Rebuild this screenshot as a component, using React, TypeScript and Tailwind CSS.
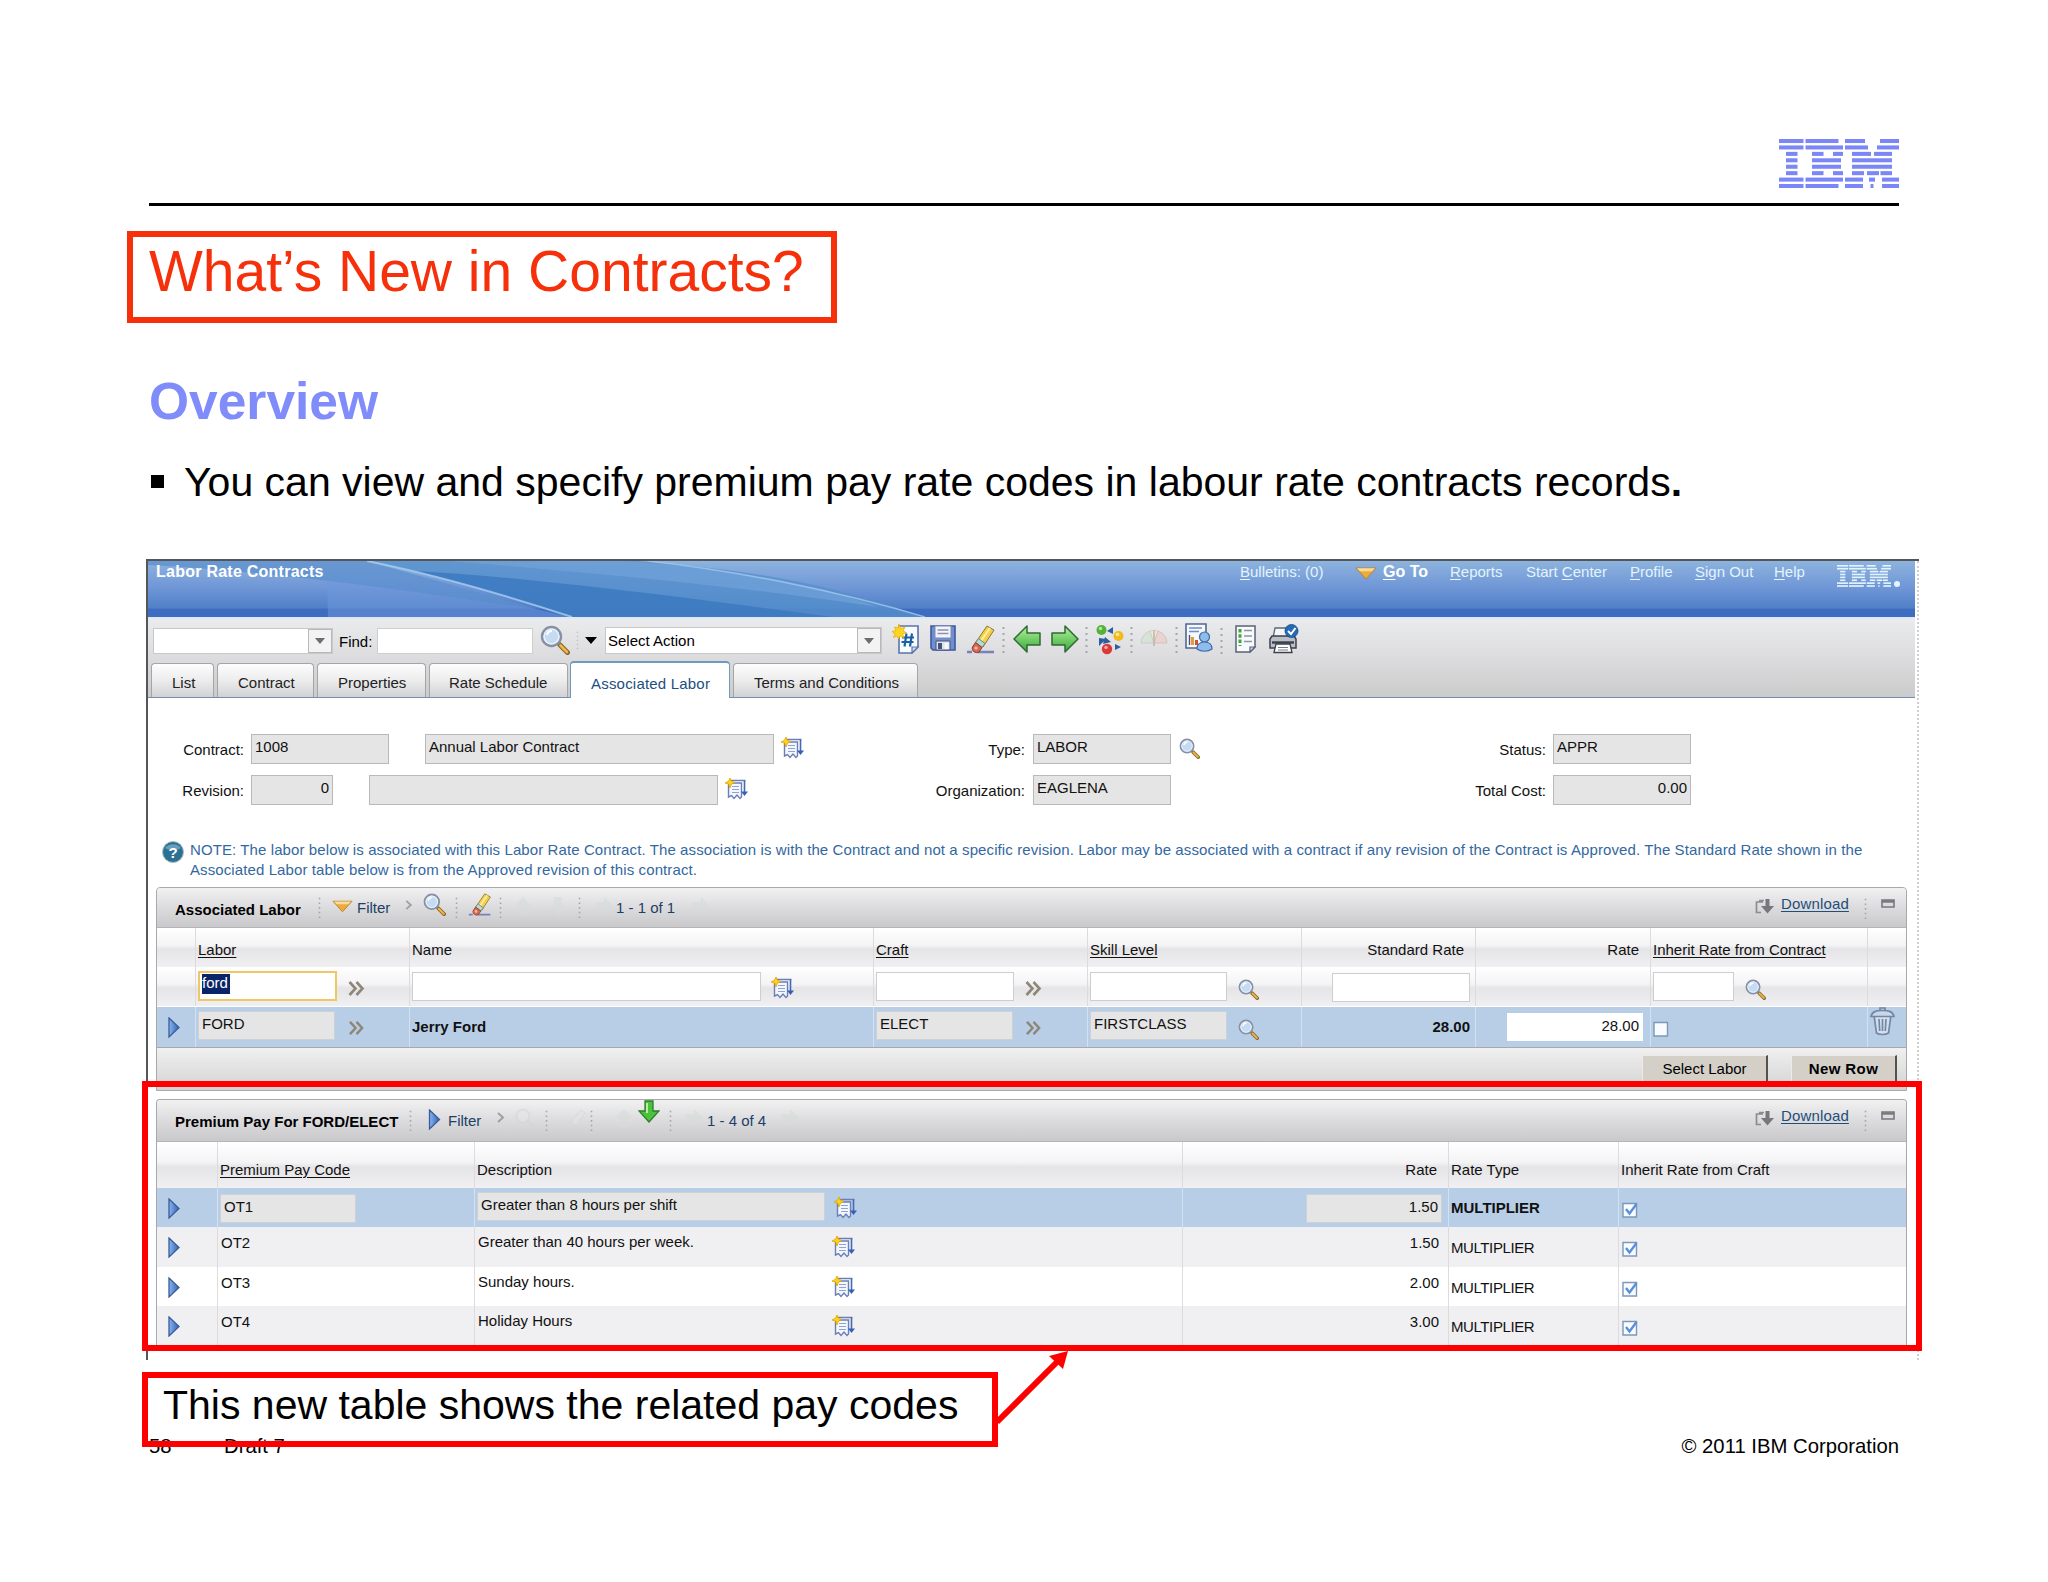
import type { ReactNode } from "react";

const stripeRows = [0, 1, 2, 3, 4, 5, 6, 7];

// Eight-bar logo, each row is a list of [x, width] segments on a 120 wide grid
const logoRows: [number, number][][] = [
    [[0, 24.5], [26.5, 33], [66, 20], [101, 19]],
    [[0, 24.5], [26.5, 37.5], [66, 23], [98, 22]],
    [[7, 11.5], [33, 11.5], [54, 10], [73, 19], [95, 18]],
    [[7, 11.5], [33, 29], [73, 40]],
    [[7, 11.5], [33, 29], [73, 40]],
    [[7, 11.5], [33, 11.5], [54, 10], [73, 12], [88, 12], [101.5, 11.5]],
    [[0, 24.5], [26.5, 37.5], [66, 18], [90, 6], [103, 17]],
    [[0, 24.5], [26.5, 33], [66, 18], [91.5, 3], [103, 17]],
];

function StripedLogo({ className, gap = 2.4 }: { className: string; gap?: number }) {
    return (
        <svg viewBox="0 0 120 49" preserveAspectRatio="none" className={className} fill="currentColor">
            {stripeRows.map((row) =>
                logoRows[row].map(([x, w]) => (
                    <rect key={`${row}-${x}`} x={x} y={row * 6.43} width={w} height={6.43 - gap} />
                ))
            )}
        </svg>
    );
}

function Lens({ className }: { className: string }) {
    return (
        <svg viewBox="0 0 30 30" className={className}>
            <path d="M18 18l3 3" stroke="#8a8f9a" strokeWidth="3" />
            <path d="M20 20l7.500 7.500" stroke="#8a6a2c" strokeWidth="5" strokeLinecap="round" />
            <path d="M20.500 20.500l6.500 6.500" stroke="#f0b64a" strokeWidth="2.600" strokeLinecap="round" />
            <circle cx="11.500" cy="11.500" r="9.500" fill="#c5dbf3" stroke="#8890a5" strokeWidth="2.400" />
            <circle cx="11.500" cy="11.500" r="7.400" fill="none" stroke="#e9f2fb" strokeWidth="1.400" />
            <path d="M7 10a5 5 0 0 1 5-4" stroke="#fff" strokeWidth="2" fill="none" />
        </svg>
    );
}

function Eraser({ className }: { className: string }) {
    return (
        <svg viewBox="0 0 28 30" className={className}>
            <path d="M0 27h5M11 27h16" stroke="#7a80b8" strokeWidth="2.400" />
            <path d="M20 1l7 4-11 17-7-5z" fill="#f3cf4c" stroke="#8a7430" strokeWidth="1" />
            <path d="M23 3l-11 16" stroke="#fff0a0" strokeWidth="2" />
            <path d="M11.500 13.500l6.500 5-3 4-6.500-5z" fill="#b9d9d3" stroke="#5f8984" strokeWidth="1" />
            <path d="M8.500 17.500l6.500 5-3 4.500c-3 2-8-1-6.500-5z" fill="#d9694f" stroke="#84382c" strokeWidth="1" />
            <circle cx="9" cy="23" r="1.600" fill="#f6b9a5" />
        </svg>
    );
}

function LongText({ className }: { className: string }) {
    return (
        <svg viewBox="0 0 23 22" className={className}>
            <path d="M5.500 2.500h15M3.500 4v15l3-1.500 2.500 3 3-3.500 3 3.500 1.500-1.500V5H5" fill="#f4f7fd" stroke="#6b7fb5" strokeWidth="1.400" />
            <path d="M7 8.500h7M7 11.500h7M7 14.500h7" stroke="#8ea2d3" strokeWidth="1.200" />
            <path d="M19.500 2.500v13" stroke="#4468b4" strokeWidth="1.600" />
            <path d="M16 13.500h7l-3.500 4.500z" fill="#3260b8" />
            <path d="M5 0l1.300 3.200L10 4.500 6.500 6 5 10 3.700 6 0 5l3.500-1.800z" fill="#ffd21c" stroke="#e0a400" strokeWidth=".8" />
        </svg>
    );
}

function NewRecord() {
    return (
        <svg viewBox="0 0 28 30" className="h-[30px] w-7">
            <path d="M7 2h19v21l-6 6H7z" fill="#f7fafe" stroke="#5b74ad" strokeWidth="1.600" />
            <path d="M20 29v-6h6z" fill="#cfdcf0" stroke="#5b74ad" strokeWidth="1.200" />
            <path d="M14.500 9.500l-2 13M20 9.500l-2 13M10 13.500h12M9.500 18h12" stroke="#1c5fa5" strokeWidth="2.200" />
            <path d="M7 0l1.500 4.500L13 3l-2 4 3.500 1.500-4 1.500 1.500 4-4-2-1.500 3-1.500-3-3.500 1.500 1.500-4L0 7.500l4-1L2.500 3l3.500 1z" fill="#ffd51e" stroke="#e6aa00" strokeWidth=".7" />
        </svg>
    );
}

function Floppy() {
    return (
        <svg viewBox="0 0 26 26" className="h-[26px] w-[26px]">
            <path d="M1 1h24v24H3l-2-2z" fill="#6f8fd0" stroke="#3f5a9b" strokeWidth="1.600" />
            <path d="M5 1h16v12H5z" fill="#f3f5fb" stroke="#7d8bb5" strokeWidth="1" />
            <path d="M7.500 5h11M7.500 8.500h11" stroke="#8b93ad" strokeWidth="1.400" />
            <path d="M6 16h14v9H6z" fill="#dfe3ec" stroke="#42527f" strokeWidth="1" />
            <path d="M8 18h4v6H8z" fill="#44527a" />
            <path d="M14.500 18h4v6h-4z" fill="#f6f7fa" />
        </svg>
    );
}

function BigArrow({ className }: { className: string }) {
    return (
        <svg viewBox="0 0 28 30" className={className}>
            <defs>
                <linearGradient id="arrowGreen" x1="0" y1="0" x2="0" y2="1">
                    <stop offset="0" stopColor="#b4f29c" />
                    <stop offset="1" stopColor="#38a838" />
                </linearGradient>
            </defs>
            <path d="M1 15L14 2v7h13v12H14v7z" fill="url(#arrowGreen)" stroke="#2f6a35" strokeWidth="1.500" strokeLinejoin="round" />
        </svg>
    );
}

function Workflow() {
    return (
        <svg viewBox="0 0 28 32" className="h-8 w-7">
            <path d="M11 7l6-4v7zM3 14l7 1-7 7zM19 20l6 3-6 3zM9 13l6 5-8 2z" fill="#2e5e9e" />
            <circle cx="5.500" cy="6" r="5" fill="#53b338" />
            <circle cx="4.500" cy="4.500" r="1.800" fill="#b0e59a" />
            <circle cx="22.500" cy="12" r="5" fill="#f3bb1a" />
            <circle cx="21.500" cy="10.500" r="1.800" fill="#fdeaa0" />
            <circle cx="11" cy="25" r="5.200" fill="#dc3838" />
            <circle cx="10" cy="23.500" r="1.800" fill="#f7a6a0" />
        </svg>
    );
}

function Gauge() {
    return (
        <svg viewBox="0 0 28 20" className="h-5 w-7 opacity-60">
            <path d="M1 15A13 13 0 0 1 10 3l4 12z" fill="#cfe3cf" stroke="#b8c4b8" />
            <path d="M10 3a13 13 0 0 1 8 0l-4 12z" fill="#f4eccb" stroke="#ccc4a8" />
            <path d="M18 3a13 13 0 0 1 9 12H14z" fill="#f0c9c0" stroke="#ccaaa4" />
            <path d="M14 2v16" stroke="#a89c8c" strokeWidth="1.600" />
        </svg>
    );
}

function Report() {
    return (
        <svg viewBox="0 0 28 30" className="h-[30px] w-7">
            <path d="M1 1h20v24H1z" fill="#f5f8fd" stroke="#55668f" strokeWidth="1.600" />
            <path d="M4 5h13M4 8.500h10" stroke="#6d8fc5" strokeWidth="1.600" />
            <path d="M4.500 12v10" stroke="#44547c" strokeWidth="1.400" />
            <path d="M6 14h3v8H6z" fill="#e89a35" />
            <path d="M10 17h3v5h-3z" fill="#d4512e" />
            <circle cx="19.500" cy="14" r="5" fill="#8fbdea" stroke="#3f6cab" strokeWidth="1.200" />
            <path d="M12 26c0-5 3-7 7.500-7s7.500 2 7.500 7c-4 3-11 3-15 0z" fill="#8fbdea" stroke="#3f6cab" strokeWidth="1.200" />
        </svg>
    );
}

function CheckList() {
    return (
        <svg viewBox="0 0 22 28" className="h-7 w-[22px]">
            <path d="M1 1h19v21l-5 5H1z" fill="#f8fafb" stroke="#5a6278" strokeWidth="1.500" />
            <path d="M15 27v-5h5z" fill="#d5dbe4" stroke="#5a6278" strokeWidth="1.200" />
            <path d="M5 4v17" stroke="#3fa540" strokeWidth="3" strokeDasharray="3.500 1.800" />
            <path d="M9 5.500h8M9 11h8M9 16.500h8" stroke="#8d93a3" strokeWidth="1.500" />
        </svg>
    );
}

function Printer() {
    return (
        <svg viewBox="0 0 30 30" className="h-[30px] w-[30px]">
            <path d="M6 4h13v10H4z" fill="#f4f6fa" stroke="#5f6675" strokeWidth="1.300" />
            <path d="M3 12h22l2 3v9H1v-9z" fill="#b9bec9" stroke="#3b404c" strokeWidth="1.500" />
            <path d="M3 18.500h22" stroke="#3b404c" strokeWidth="2.400" />
            <path d="M7 20h14l2 8.500H5z" fill="#fff" stroke="#3b404c" strokeWidth="1.300" />
            <path d="M9 23.500h10M9 26h10" stroke="#777d8c" strokeWidth="1.200" />
            <circle cx="22.500" cy="7" r="6.500" fill="#246ab4" stroke="#154578" strokeWidth=".8" />
            <path d="M19 7l3 3 4.500-6" stroke="#fff" strokeWidth="2" fill="none" />
        </svg>
    );
}

function Grip({ className }: { className: string }) {
    return (
        <svg viewBox="0 0 3 27" className={className}>
            <path d="M1.500 1v26" stroke="#a5a5ab" strokeWidth="2" strokeDasharray="2 4" />
        </svg>
    );
}

function Chevrons({ className }: { className: string }) {
    return (
        <svg viewBox="0 0 17 15" className={className} fill="none" stroke="#8e8779" strokeWidth="2.600">
            <path d="M1.500 1l6 6.500-6 6.500M8.500 1l6 6.500-6 6.500" />
        </svg>
    );
}

function Play({ className }: { className: string }) {
    return (
        <svg viewBox="0 0 12 21" className={className}>
            <defs>
                <linearGradient id="playBlue" x1="0" y1="0" x2="1" y2="0">
                    <stop offset="0" stopColor="#8bb4ee" />
                    <stop offset="1" stopColor="#2f62b2" />
                </linearGradient>
            </defs>
            <path d="M1 1l10 9.500L1 20z" fill="url(#playBlue)" stroke="#3a5c9b" strokeWidth="1.300" />
        </svg>
    );
}

function OrangeDown({ className }: { className: string }) {
    return (
        <svg viewBox="0 0 22 13" className={className}>
            <path d="M1 1h20L11 12z" fill="#eeab3d" stroke="#b98431" strokeWidth="1" />
            <path d="M2 1.200h18l-3 3H5z" fill="#f9dc98" />
        </svg>
    );
}

function SmallDown({ className }: { className: string }) {
    return (
        <svg viewBox="0 0 12 7" className={className} fill="currentColor">
            <path d="M0 0h12L6 7z" />
        </svg>
    );
}

function FaintArrow({ className }: { className: string }) {
    return (
        <svg viewBox="0 0 20 20" className={className}>
            <path d="M19 10L10 1v5H1v8h9v5z" fill="#d6dcd8" opacity=".65" />
        </svg>
    );
}

function GreenDown() {
    return (
        <svg viewBox="0 0 22 23" className="h-[23px] w-[22px]">
            <path d="M7 1h8v10h6L11 22 1 11h6z" fill="#4cc23c" stroke="#2f7d2c" strokeWidth="1.300" />
            <path d="M9 3v10" stroke="#b7efa5" strokeWidth="2" />
        </svg>
    );
}

function Trash() {
    return (
        <svg viewBox="0 0 25 29" className="h-[29px] w-[25px]" fill="none" stroke="#7387a2" strokeWidth="1.700">
            <path d="M4 8l2.500 18c3 2 9 2 12 0L21 8" fill="#d3dfee" />
            <path d="M1 9.500c1-5 5-6 11.500-6s10.500 1 11.500 6z" fill="#c8d7e9" />
            <path d="M10 3.500V1h5v2.500M9 12l.7 12M12.500 12v12M16 12l-.7 12" />
        </svg>
    );
}

function ToolbarSlot({ className, children }: { className: string; children: ReactNode }) {
    return <div className={`shrink-0 ${className}`}>{children}</div>;
}

function Field({ className, children }: { className: string; children?: ReactNode }) {
    return (
        <div className={`shrink-0 border border-[#b9b9bb] bg-[#e5e5e5] px-[3px] pt-[3px] leading-[18px] ${className}`}>
            {children}
        </div>
    );
}

function Input({ className, children }: { className: string; children?: ReactNode }) {
    return <div className={`shrink-0 border border-[#cfcdcd] bg-white ${className}`}>{children}</div>;
}

function CheckBox({ checked, className }: { checked?: boolean; className: string }) {
    return (
        <svg viewBox="0 0 16 16" className={`h-4 w-4 shrink-0 ${className}`} fill="none">
            <path d="M1 1.500h13.500V15H1z" fill="#f8fcff" stroke="#7c98b5" strokeWidth="1.400" />
            {checked && <path d="M4 7l3.500 4.500L14.500 2" stroke="#5b8fdd" strokeWidth="2.400" />}
        </svg>
    );
}

function BarEnd() {
    return (
        <div className="ml-auto flex pr-[11px]">
            <svg viewBox="0 0 19 15" className="mt-[11px] mr-[7px] h-[15px] w-[19px]">
                <path d="M8 3H1.500v10.500H6M4 1.500h5" fill="none" stroke="#8b8b90" strokeWidth="1.700" />
                <path d="M10.500 0h4v7H19l-6.500 7.500L6 7h4.500z" fill="#77777c" />
            </svg>
            <span className="mt-[7px] w-[83px] tracking-[0.15px] text-[#1f4e79] underline underline-offset-2">Download</span>
            <Grip className="mt-[10px] mr-[14px] h-[21px] w-[3px]" />
            <svg viewBox="0 0 14 9" className="mt-[11px] h-[9px] w-[14px]">
                <path d="M1 1h12v7H1z" fill="#dcdce0" stroke="#77777c" strokeWidth="1.600" />
                <path d="M1 2.500h12" stroke="#77777c" strokeWidth="2.400" />
            </svg>
        </div>
    );
}

const navLinks = [
    { key: "R", before: "", after: "eports", cell: "w-[76px]" },
    { key: "C", before: "Start ", after: "enter", cell: "w-[104px]" },
    { key: "P", before: "", after: "rofile", cell: "w-[65px]" },
    { key: "S", before: "", after: "ign Out", cell: "w-[79px]" },
    { key: "H", before: "", after: "elp", cell: "w-[63px]" },
];

const tabs = [
    { label: "List", cell: "ml-[3px] w-[63px] pl-[20px]" },
    { label: "Contract", cell: "ml-[3px] w-[97px] pl-[20px]" },
    { label: "Properties", cell: "ml-[3px] w-[109px] pl-[20px]" },
    { label: "Rate Schedule", cell: "ml-[3px] w-[139px] pl-[19px]" },
    { label: "Associated Labor", cell: "ml-[2px] w-[160px] pl-[20px]", active: true },
    { label: "Terms and Conditions", cell: "ml-[3px] w-[185px] pl-[20px]" },
];

const premiumRows = [
    { code: "OT1", text: "Greater than 8 hours per shift", rate: "1.50", row: "h-[39px] bg-[#b8cee6]", selected: true },
    { code: "OT2", text: "Greater than 40 hours per week.", rate: "1.50", row: "h-[40px] bg-[#f0eff2]" },
    { code: "OT3", text: "Sunday hours.", rate: "2.00", row: "h-[39px] bg-white" },
    { code: "OT4", text: "Holiday Hours", rate: "3.00", row: "h-[39px] bg-[#f0eff2]" },
];

const laborGrid = "grid grid-cols-[38px_214px_464px_214px_214px_174px_175px_217px_39px]";
const premiumGrid = "grid grid-cols-[60px_257px_708px_266px_170px_288px]";
const headFill = "bg-[linear-gradient(#ffffff,#f4f3f5_44%,#e5e4e6_54%,#f0eff1)]";
const barFill = "bg-[linear-gradient(#f1f1f2,#dedee0_45%,#c9c9cb)]";
const col = "flex items-start border-l border-[#dcdbde] pl-[2px]";
const blueCol = "flex items-start border-l border-[#d3e2f0] pl-[2px]";

function AppHeader() {
    return (
        <div className="relative h-[58px] w-[1767px] border-b-2 border-[#dfe8f5] bg-[linear-gradient(#8db3de,#6f96d6_48%,#5080c8_84%,#3e6cc0_86%)] text-[#e3f4fd]">
            <svg viewBox="0 0 1767 56" className="absolute inset-x-0 top-0 h-14 w-full" preserveAspectRatio="none">
                <path d="M0 0h219L392 49C300 36 150 12 0 4z" fill="#5c8fcd" opacity=".75" />
                <path d="M179 19C260 30 330 39 392 49L422 56H180z" fill="#6d98dc" opacity=".5" />
                <path d="M219 0h270C640 12 700 30 777 56H422C360 36 290 14 219 0z" fill="#5590cc" opacity=".8" />
                <path d="M265 10c90 4 240 22 420 46H422C360 36 310 20 265 10z" fill="#3c79bf" opacity=".85" />
                <path d="M300 0h180c100 8 180 20 250 46C600 26 450 12 300 0z" fill="#74a5da" opacity=".6" />
                <path d="M219 0c70 14 150 38 205 56" stroke="#a9cdf0" strokeWidth="2" fill="none" opacity=".8" />
                <path d="M500 0c90 10 190 30 277 56" stroke="#a3c6ee" strokeWidth="1.500" fill="none" opacity=".8" />
            </svg>
            <div className="relative flex pt-[2px] pl-2 leading-[18px]">
                <span className="w-[1084px] text-[16px] font-bold tracking-[0.25px] text-white">Labor Rate Contracts</span>
                <span className="w-[115px]"><u className="underline-offset-2">B</u>ulletins: (0)</span>
                <OrangeDown className="mt-[4px] mr-[6px] h-[13px] w-[22px]" />
                <span className="w-[67px] text-[16px] font-bold text-white"><u className="underline-offset-2">G</u>o To</span>
                {navLinks.map((link) => (
                    <span key={link.key} className={link.cell}>
                        {link.before}
                        <u className="underline-offset-2">{link.key}</u>
                        {link.after}
                    </span>
                ))}
                <StripedLogo className="mt-[2px] h-[22px] w-[54px]" gap={2.8} />
                <i className="mt-[18px] ml-[3px] h-[6px] w-[6px] rounded-full bg-current" />
            </div>
        </div>
    );
}

function Toolbar() {
    return (
        <div className="w-[1767px] border-b border-[#6f8fb8] bg-[linear-gradient(#eaebec,#dcdcde_50%,#cbcbcc)]">
            <div className="flex h-[42px] items-start pl-[5px]">
                <div className="mt-[9px] flex h-[26px] w-[180px] justify-end border border-[#c8c8ca] bg-white">
                    <span className="flex h-full w-[24px] items-center justify-center border border-[#b9b9bb] bg-[#f3f3f3] text-[#6d6d6d]">
                        <SmallDown className="h-[6px] w-[10px]" />
                    </span>
                </div>
                <span className="mt-[14px] ml-[6px] w-[38px] leading-[18px]">Find:</span>
                <Input className="mt-[9px] h-[26px] w-[156px]" />
                <Lens className="mt-[6px] ml-[7px] h-[30px] w-[30px]" />
                <Grip className="mt-[12px] ml-[6px] h-[18px] w-[3px] opacity-60" />
                <SmallDown className="mt-[18px] ml-[6px] h-[7px] w-[12px] text-black" />
                <div className="mt-[8px] ml-[8px] flex h-[27px] w-[277px] justify-between border border-[#c8c8ca] bg-white">
                    <span className="pt-[4px] pl-[2px] leading-[18px] text-black">Select Action</span>
                    <span className="flex h-full w-[24px] items-center justify-center border border-[#b9b9bb] bg-[#f3f3f3] text-[#6d6d6d]">
                        <SmallDown className="h-[6px] w-[10px]" />
                    </span>
                </div>
                <ToolbarSlot className="mt-[5px] ml-[10px] w-[38px]"><NewRecord /></ToolbarSlot>
                <ToolbarSlot className="mt-[6px] w-[37px]"><Floppy /></ToolbarSlot>
                <ToolbarSlot className="mt-[6px] w-[35px]"><Eraser className="h-[30px] w-7" /></ToolbarSlot>
                <ToolbarSlot className="mt-[7px] w-[11px]"><Grip className="h-[27px] w-[3px]" /></ToolbarSlot>
                <ToolbarSlot className="mt-[5px] w-[38px]"><BigArrow className="h-[30px] w-7" /></ToolbarSlot>
                <ToolbarSlot className="mt-[5px] w-[34px]"><BigArrow className="h-[30px] w-7 -scale-x-100" /></ToolbarSlot>
                <ToolbarSlot className="mt-[7px] w-[11px]"><Grip className="h-[27px] w-[3px]" /></ToolbarSlot>
                <ToolbarSlot className="mt-[5px] w-[34px]"><Workflow /></ToolbarSlot>
                <ToolbarSlot className="mt-[7px] w-[10px]"><Grip className="h-[27px] w-[3px]" /></ToolbarSlot>
                <ToolbarSlot className="mt-[9px] w-[35px]"><Gauge /></ToolbarSlot>
                <ToolbarSlot className="mt-[7px] w-[10px]"><Grip className="h-[27px] w-[3px]" /></ToolbarSlot>
                <ToolbarSlot className="mt-[4px] w-[35px]"><Report /></ToolbarSlot>
                <ToolbarSlot className="mt-[8px] w-[15px]"><Grip className="h-[27px] w-[3px]" /></ToolbarSlot>
                <ToolbarSlot className="mt-[6px] w-[34px]"><CheckList /></ToolbarSlot>
                <ToolbarSlot className="mt-[5px]"><Printer /></ToolbarSlot>
            </div>
            <div className="flex h-9 items-end">
                {tabs.map((tab) =>
                    tab.active ? (
                        <div key={tab.label} className={`-mb-px h-[37px] rounded-t border-x border-t-2 border-[#6f9ac0] bg-white pt-[12px] leading-[18px] tracking-[0.2px] text-[#1c4f80] ${tab.cell}`}>
                            {tab.label}
                        </div>
                    ) : (
                        <div key={tab.label} className={`h-[34px] rounded-t-sm border-x border-t border-[#a5a5a8] bg-[linear-gradient(#fdfdfd,#ececed_50%,#d2d2d4)] pt-[10px] leading-[18px] text-[#222] ${tab.cell}`}>
                            {tab.label}
                        </div>
                    )
                )}
            </div>
        </div>
    );
}

function ContractForm() {
    return (
        <div className="pt-[36px] leading-[18px] text-[#111]">
            <div className="flex h-[30px] items-start">
                <span className="mt-[7px] w-[96px] text-right">Contract:</span>
                <Field className="ml-[7px] h-[30px] w-[138px]">1008</Field>
                <Field className="ml-[36px] h-[30px] w-[349px]">Annual Labor Contract</Field>
                <LongText className="mt-[3px] ml-[7px] h-[22px] w-[23px]" />
                <span className="mt-[7px] w-[221px] text-right">Type:</span>
                <Field className="ml-[8px] h-[30px] w-[138px]">LABOR</Field>
                <Lens className="mt-[4px] ml-[8px] h-[21px] w-[21px]" />
                <span className="mt-[7px] w-[346px] text-right">Status:</span>
                <Field className="ml-[7px] h-[30px] w-[138px]">APPR</Field>
            </div>
            <div className="mt-[11px] flex h-[30px] items-start">
                <span className="mt-[7px] w-[96px] text-right">Revision:</span>
                <Field className="ml-[7px] h-[30px] w-[82px] text-right">0</Field>
                <Field className="ml-[36px] h-[30px] w-[349px]" />
                <LongText className="mt-[3px] ml-[7px] h-[22px] w-[23px]" />
                <span className="mt-[7px] w-[277px] text-right">Organization:</span>
                <Field className="ml-[8px] h-[30px] w-[138px]">EAGLENA</Field>
                <span className="mt-[7px] w-[375px] text-right">Total Cost:</span>
                <Field className="ml-[7px] h-[30px] w-[138px] text-right">0.00</Field>
            </div>
            <div className="mt-[35px] flex pl-[14px] text-[#33689f]">
                <svg viewBox="0 0 22 24" className="h-6 w-[22px]">
                    <circle cx="11" cy="12" r="10.500" fill="#2d7092" stroke="#a9bfcc" strokeWidth="1" />
                    <path d="M3 8a9 7 0 0 1 16 0c-5 3-11 3-16 0z" fill="#7db3cc" opacity=".7" />
                    <text x="11" y="17.500" textAnchor="middle" fontSize="15" fontWeight="bold" fill="#fff">?</text>
                </svg>
                <div className="ml-[6px] h-10 leading-[20px]">
                    <p className="tracking-[0.1px]">
                        NOTE: The labor below is associated with this Labor Rate Contract. The association is with the Contract and not a specific revision. Labor may be associated with a contract if any revision of the Contract is Approved. The Standard Rate shown in the
                    </p>
                    <p className="tracking-[0.1px]">Associated Labor table below is from the Approved revision of this contract.</p>
                </div>
            </div>
        </div>
    );
}

function LaborPanel() {
    return (
        <div className="mt-[7px] ml-2 h-[204px] w-[1751px] rounded-t border border-[#a9a9ab] leading-[18px] text-[#111]">
            <div className={`flex h-10 items-start rounded-t border-b border-[#b5b5b7] pl-[18px] text-[#1d3f66] ${barFill}`}>
                <b className="mt-[13px] w-[143px] text-black">Associated Labor</b>
                <Grip className="mt-[9px] mr-[11px] h-[21px] w-[3px]" />
                <OrangeDown className="mt-[12px] mr-[4px] h-[13px] w-[21px]" />
                <span className="mt-[11px] w-[48px]">Filter</span>
                <svg viewBox="0 0 8 11" className="mt-[12px] mr-[10px] h-[10px] w-[8px]" fill="none" stroke="#a0a0a4" strokeWidth="2">
                    <path d="M1 1l5 4.500-5 4.500" />
                </svg>
                <Lens className="mt-[5px] mr-[9px] h-[23px] w-[23px]" />
                <Grip className="mt-[9px] mr-[10px] h-[21px] w-[3px]" />
                <Eraser className="mt-[5px] mr-[7px] h-[24px] w-[24px]" />
                <Grip className="mt-[9px] mr-[11px] h-[21px] w-[3px]" />
                <FaintArrow className="mt-[8px] mr-[15px] h-5 w-5 -rotate-90" />
                <FaintArrow className="mt-[8px] mr-[10px] h-5 w-5 rotate-90" />
                <Grip className="mt-[9px] mr-[13px] h-[21px] w-[3px]" />
                <FaintArrow className="mt-[8px] mr-[2px] h-5 w-5" />
                <span className="mt-[11px] w-[75px]">1 - 1 of 1</span>
                <FaintArrow className="mt-[8px] h-5 w-5" />
                <BarEnd />
            </div>
            <div className={`h-[39px] ${laborGrid} ${headFill}`}>
                <div />
                <div className={col}><u className="mt-[13px] underline-offset-2">Labor</u></div>
                <div className={col}><span className="mt-[13px]">Name</span></div>
                <div className={col}><u className="mt-[13px] underline-offset-2">Craft</u></div>
                <div className={col}><u className="mt-[13px] underline-offset-2">Skill Level</u></div>
                <div className={`${col} justify-end pr-[11px]`}><span className="mt-[13px]">Standard Rate</span></div>
                <div className={`${col} justify-end pr-[11px]`}><span className="mt-[13px]">Rate</span></div>
                <div className={col}><u className="mt-[13px] underline-offset-2">Inherit Rate from Contract</u></div>
                <div className={col} />
            </div>
            <div className={`h-[40px] border-b border-white ${laborGrid} ${headFill}`}>
                <div />
                <div className={col}>
                    <div className="mt-[4px] h-[30px] w-[139px] border-2 border-[#f0c765] bg-white pt-px pl-[2px]">
                        <span className="inline-block h-[20px] w-[28px] bg-[#0a246a] text-white">ford</span>
                    </div>
                    <Chevrons className="mt-[14px] ml-[11px] h-[15px] w-[17px]" />
                </div>
                <div className={col}>
                    <Input className="mt-[5px] h-[29px] w-[349px]" />
                    <LongText className="mt-[10px] ml-[10px] h-[22px] w-[23px]" />
                </div>
                <div className={col}>
                    <Input className="mt-[5px] h-[29px] w-[138px]" />
                    <Chevrons className="mt-[14px] ml-[11px] h-[15px] w-[17px]" />
                </div>
                <div className={col}>
                    <Input className="mt-[5px] h-[29px] w-[137px]" />
                    <Lens className="mt-[12px] ml-[11px] h-[21px] w-[21px]" />
                </div>
                <div className={`${col} justify-end pr-[5px]`}><Input className="mt-[6px] h-[29px] w-[138px]" /></div>
                <div className={col} />
                <div className={col}>
                    <Input className="mt-[5px] h-[29px] w-[81px]" />
                    <Lens className="mt-[12px] ml-[11px] h-[21px] w-[21px]" />
                </div>
                <div className={col} />
            </div>
            <div className={`h-[41px] border-b border-[#a9a9ab] bg-[#b8cee6] ${laborGrid}`}>
                <div><Play className="mt-[10px] ml-[11px] h-[21px] w-[12px]" /></div>
                <div className={blueCol}>
                    <Field className="mt-[4px] h-[29px] w-[137px] border-[#ccd1d6]">FORD</Field>
                    <Chevrons className="mt-[14px] ml-[13px] h-[14px] w-[17px]" />
                </div>
                <div className={blueCol}><b className="mt-[11px]">Jerry Ford</b></div>
                <div className={blueCol}>
                    <Field className="mt-[4px] h-[29px] w-[137px] border-[#ccd1d6]">ELECT</Field>
                    <Chevrons className="mt-[14px] ml-[12px] h-[14px] w-[17px]" />
                </div>
                <div className={blueCol}>
                    <Field className="mt-[4px] h-[29px] w-[137px] border-[#ccd1d6]">FIRSTCLASS</Field>
                    <Lens className="mt-[12px] ml-[11px] h-[21px] w-[21px]" />
                </div>
                <div className={`${blueCol} justify-end pr-[5px]`}><b className="mt-[11px]">28.00</b></div>
                <div className={`${blueCol} justify-end pr-[7px]`}>
                    <div className="mt-[6px] h-[28px] w-[136px] bg-white pt-[4px] pr-[4px] text-right">28.00</div>
                </div>
                <div className={blueCol}><CheckBox className="mt-[14px]" /></div>
                <div className={blueCol}><Trash /></div>
            </div>
            <div className="flex h-[42px] justify-end bg-[linear-gradient(#f0f0f0,#d3d3d4)] pt-[7px] pr-[9px] text-black">
                <div className="mr-[23px] h-[30px] w-[126px] border-t border-r-2 border-l border-t-[#eeeae4] border-r-[#55524d] border-l-[#eeeae4] bg-[#d4d0c8] pt-[4px] text-center">
                    Select Labor
                </div>
                <div className="h-[30px] w-[106px] border-t border-r-2 border-l border-t-[#eeeae4] border-r-[#55524d] border-l-[#eeeae4] bg-[#d4d0c8] pt-[4px] text-center font-bold tracking-[0.4px]">
                    New Row
                </div>
            </div>
        </div>
    );
}

function PremiumPanel() {
    return (
        <div className="mt-2 ml-2 w-[1751px] rounded-t border-x border-t border-[#a9a9ab] leading-[18px] text-[#111]">
            <div className={`flex h-[42px] items-start rounded-t border-b border-[#b5b5b7] pl-[18px] text-[#1d3f66] ${barFill}`}>
                <b className="mt-[13px] w-[234px] text-black">Premium Pay For FORD/ELECT</b>
                <Grip className="mt-[10px] mr-[16px] h-[21px] w-[3px]" />
                <Play className="mt-[9px] mr-[7px] h-[21px] w-[13px]" />
                <span className="mt-[12px] w-[49px]">Filter</span>
                <svg viewBox="0 0 8 11" className="mt-[12px] mr-[10px] h-[11px] w-[8px]" fill="none" stroke="#a0a0a4" strokeWidth="2">
                    <path d="M1 1l5 4.500-5 4.500" />
                </svg>
                <svg viewBox="0 0 20 20" className="mt-[8px] mr-[10px] h-5 w-5 opacity-60">
                    <circle cx="8" cy="8" r="6.500" fill="#e6e6ea" stroke="#d6d6da" strokeWidth="2" />
                    <path d="M13 13l5 5" stroke="#d6d6da" strokeWidth="3" />
                </svg>
                <Grip className="mt-[10px] mr-[19px] h-[21px] w-[3px]" />
                <svg viewBox="0 0 20 20" className="mt-[8px] mr-[3px] h-5 w-5 opacity-60">
                    <path d="M14 2l4 3-9 12-5-3z" fill="#e4e4e6" stroke="#d4d4d8" />
                </svg>
                <Grip className="mt-[10px] mr-[21px] h-[21px] w-[3px]" />
                <FaintArrow className="mt-[8px] mr-[4px] h-5 w-5 -rotate-90" />
                <GreenDown />
                <Grip className="mt-[10px] ml-[9px] h-[21px] w-[3px]" />
                <FaintArrow className="mt-[8px] mr-[3px] ml-[12px] h-5 w-5" />
                <span className="mt-[12px] w-[73px]">1 - 4 of 4</span>
                <FaintArrow className="mt-[8px] h-5 w-5" />
                <BarEnd />
            </div>
            <div className={`h-[46px] ${premiumGrid} ${headFill}`}>
                <div />
                <div className={col}><u className="mt-[19px] underline-offset-2">Premium Pay Code</u></div>
                <div className={col}><span className="mt-[19px]">Description</span></div>
                <div className={`${col} justify-end pr-[11px]`}><span className="mt-[19px]">Rate</span></div>
                <div className={col}><span className="mt-[19px]">Rate Type</span></div>
                <div className={col}><span className="mt-[19px]">Inherit Rate from Craft</span></div>
            </div>
            {premiumRows.map((item) => {
                const cell = item.selected ? blueCol : col;
                return (
                    <div key={item.code} className={`${premiumGrid} ${item.row}`}>
                        <div><Play className="mt-[10px] ml-[11px] h-[21px] w-[12px]" /></div>
                        <div className={cell}>
                            {item.selected ? (
                                <Field className="mt-[6px] h-[29px] w-[136px] border-[#ccd1d6] px-[2px]">{item.code}</Field>
                            ) : (
                                <span className="mt-[7px] ml-px">{item.code}</span>
                            )}
                        </div>
                        <div className={cell}>
                            {item.selected ? (
                                <Field className="mt-[4px] h-[29px] w-[348px] border-[#ccd1d6] px-[2px]">{item.text}</Field>
                            ) : (
                                <span className="mt-[6px] ml-px w-[345px]">{item.text}</span>
                            )}
                            <LongText className="mt-[9px] ml-[9px] h-[22px] w-[23px]" />
                        </div>
                        <div className={`${cell} justify-end pr-[6px]`}>
                            {item.selected ? (
                                <Field className="mt-[6px] h-[29px] w-[136px] border-[#ccd1d6] pt-[3px] text-right">{item.rate}</Field>
                            ) : (
                                <span className="mt-[7px] pr-[3px]">{item.rate}</span>
                            )}
                        </div>
                        <div className={cell}>
                            {item.selected ? (
                                <b className="mt-[11px]">MULTIPLIER</b>
                            ) : (
                                <span className="mt-[12px] tracking-[-0.4px]">MULTIPLIER</span>
                            )}
                        </div>
                        <div className={cell}><CheckBox checked className="mt-[14px] ml-px" /></div>
                    </div>
                );
            })}
        </div>
    );
}

export default function App() {
    return (
        <div className="h-[1582px] w-[2048px] overflow-hidden bg-white font-['Liberation_Sans',Arial,sans-serif] whitespace-nowrap text-black">
            <header className="ml-[149px] w-[1750px] pt-[139px]">
                <StripedLogo className="ml-auto h-[49px] w-[120px] text-[#7b87f7]" />
                <div className="mt-[15px] h-[3px] bg-black" />
            </header>

            <h1 className="mt-[25px] ml-[127px] h-[92px] w-[710px] border-[6px] border-[#f5300a] pt-[6px] pl-[16px] text-[57px] leading-[57px] text-[#f5300a]">
                What’s New in Contracts?
            </h1>
            <h2 className="mt-[52px] ml-[149px] text-[51.5px] leading-[52px] font-bold text-[#7f8cfa]">Overview</h2>
            <div className="mt-[32px] ml-[151px] flex h-[46px] text-[41px] leading-[46px]">
                <i className="mt-[16px] mr-[20px] h-[13px] w-[13px] bg-black" />
                <p>You can view and specify premium pay rate codes in labour rate contracts records<b>.</b></p>
            </div>

            <main className="relative mt-[54px] ml-[146px] h-[801px] w-[1773px] border-t-2 border-l-2 border-[#55565a] text-[15px]">
                <div className="h-full w-[1771px] border-r-2 border-dotted border-[#d0d0d0]">
                    <AppHeader />
                    <Toolbar />
                    <ContractForm />
                    <LaborPanel />
                    <PremiumPanel />
                </div>
                <div className="absolute top-[520px] -left-[6px] h-[270px] w-[1780px] border-[6px] border-[#fe0000]" />
                <svg viewBox="0 0 80 80" className="absolute top-[787px] left-[846px] h-20 w-20">
                    <path d="M3 74L64 13" stroke="#fe0000" strokeWidth="6" />
                    <path d="M74 3L55 8l14 13z" fill="#fe0000" />
                </svg>
            </main>

            <div className="relative z-10 mt-[12px] ml-[142px] h-[75px] w-[856px] border-[6px] border-[#fe0000] pt-[4px] pl-[15px] text-[41px] leading-[46px]">
                This new table shows the related pay codes
            </div>
            <footer className="-mt-[13px] ml-[149px] flex w-[1750px] text-[20.300px] leading-[24px]">
                <span className="w-[75px]">58</span>
                <span>Draft 7</span>
                <span className="ml-auto">© 2011 IBM Corporation</span>
            </footer>
        </div>
    );
}
